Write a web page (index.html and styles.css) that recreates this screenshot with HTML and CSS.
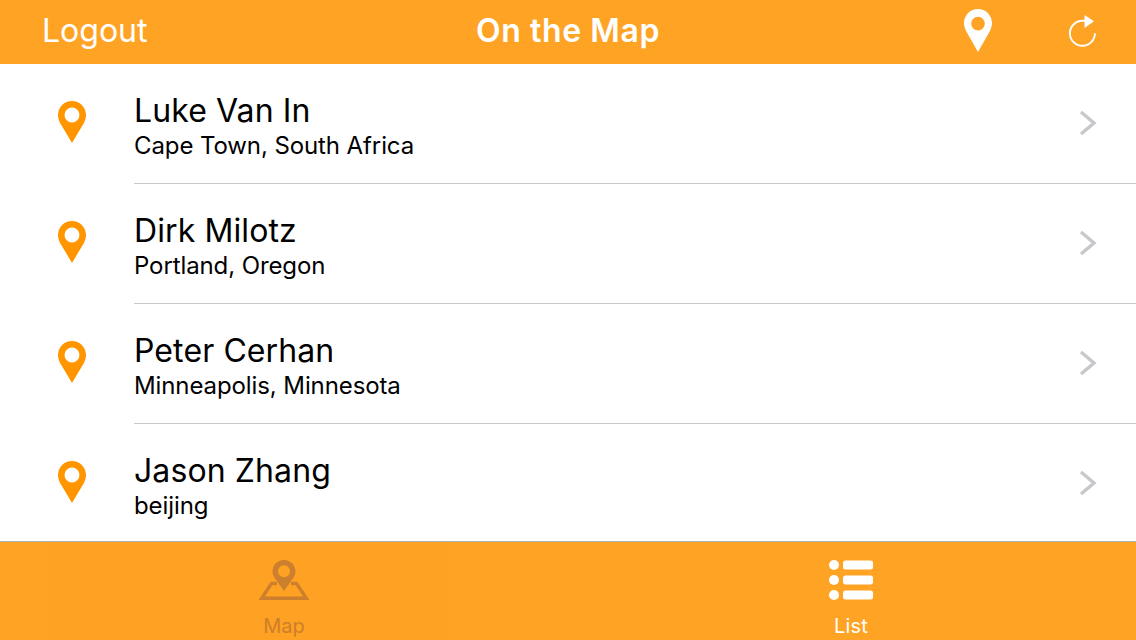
FILE: index.html
```html
<!DOCTYPE html>
<html lang="en">
<head>
<meta charset="utf-8">
<title>On the Map</title>
<link rel="stylesheet" href="styles.css">
</head>
<body>
<div class="app">
  <header class="navbar">
    <div class="nav-left"><span class="logout">Logout</span></div>
    <div class="nav-title">On the Map</div>
    <div class="nav-right">
      <svg class="nav-pin" viewBox="0 0 28 43"><path fill="#fff" fill-rule="evenodd" d="M14 0C6.3 0 0 6.2 0 14c0 3 1 5.800 2.200 8.200L14 43l11.800-20.800C27 19.800 28 17 28 14 28 6.200 21.700 0 14 0zm0 7.800a6.800 6.800 0 1 1 0 13.600 6.800 6.800 0 0 1 0-13.600z"/></svg>
      <svg class="nav-refresh" viewBox="0 0 30 32"><path fill="none" stroke="#fff" stroke-width="1.900" d="M26.900 18.300a12.500 12.500 0 1 1-12.500-12.500h3"/><path fill="#fff" d="M16.500 0 26 6.300 16.500 13z"/></svg>
    </div>
  </header>

  <main class="list">
    <div class="row">
      <div class="row-icon"><svg class="pin" viewBox="0 0 28 42"><path fill="#ff9500" fill-rule="evenodd" d="M14 0C6.300 0 0 6.200 0 14c0 3 1 5.800 2.200 8.200L14 42l11.800-19.800C27 19.800 28 17 28 14 28 6.200 21.700 0 14 0zm0 6.500a7.500 7.500 0 1 1 0 15 7.500 7.500 0 0 1 0-15z"/></svg></div>
      <div class="row-body">
        <div class="row-text"><div class="name">Luke Van In</div><div class="place">Cape Town, South Africa</div></div>
        <svg class="chevron" viewBox="0 0 18 26"><path fill="none" stroke="#c7c7cc" stroke-width="3.400" d="M2 2l13 11L2 24"/></svg>
      </div>
    </div>
    <div class="row">
      <div class="row-icon"><svg class="pin" viewBox="0 0 28 42"><path fill="#ff9500" fill-rule="evenodd" d="M14 0C6.300 0 0 6.200 0 14c0 3 1 5.800 2.200 8.200L14 42l11.800-19.800C27 19.800 28 17 28 14 28 6.200 21.700 0 14 0zm0 6.500a7.500 7.500 0 1 1 0 15 7.500 7.500 0 0 1 0-15z"/></svg></div>
      <div class="row-body">
        <div class="row-text"><div class="name">Dirk Milotz</div><div class="place">Portland, Oregon</div></div>
        <svg class="chevron" viewBox="0 0 18 26"><path fill="none" stroke="#c7c7cc" stroke-width="3.400" d="M2 2l13 11L2 24"/></svg>
      </div>
    </div>
    <div class="row">
      <div class="row-icon"><svg class="pin" viewBox="0 0 28 42"><path fill="#ff9500" fill-rule="evenodd" d="M14 0C6.300 0 0 6.200 0 14c0 3 1 5.800 2.200 8.200L14 42l11.800-19.800C27 19.800 28 17 28 14 28 6.200 21.700 0 14 0zm0 6.500a7.500 7.500 0 1 1 0 15 7.500 7.500 0 0 1 0-15z"/></svg></div>
      <div class="row-body">
        <div class="row-text"><div class="name">Peter Cerhan</div><div class="place">Minneapolis, Minnesota</div></div>
        <svg class="chevron" viewBox="0 0 18 26"><path fill="none" stroke="#c7c7cc" stroke-width="3.400" d="M2 2l13 11L2 24"/></svg>
      </div>
    </div>
    <div class="row">
      <div class="row-icon"><svg class="pin" viewBox="0 0 28 42"><path fill="#ff9500" fill-rule="evenodd" d="M14 0C6.300 0 0 6.200 0 14c0 3 1 5.800 2.200 8.200L14 42l11.800-19.800C27 19.800 28 17 28 14 28 6.200 21.700 0 14 0zm0 6.500a7.500 7.500 0 1 1 0 15 7.500 7.500 0 0 1 0-15z"/></svg></div>
      <div class="row-body">
        <div class="row-text"><div class="name">Jason Zhang</div><div class="place">beijing</div></div>
        <svg class="chevron" viewBox="0 0 18 26"><path fill="none" stroke="#c7c7cc" stroke-width="3.400" d="M2 2l13 11L2 24"/></svg>
      </div>
    </div>
  </main>

  <nav class="tabbar">
    <div class="tab tab-dim">
      <svg class="tab-icon" viewBox="0 0 50 40"><path fill="none" stroke="#cc7f2c" stroke-width="3.400" d="M18 23.500h-5.500L2.600 38.300h44.800L37.500 23.500H32"/><path fill="#cc7f2c" fill-rule="evenodd" d="M25 0c-6.300 0-11.500 5-11.500 11.300 0 2.400.8 4.500 1.900 6.300L25 31l9.600-13.400c1.100-1.800 1.900-3.900 1.900-6.300C36.500 5 31.300 0 25 0zm0 5.300a6 6 0 1 1 0 12 6 6 0 0 1 0-12z"/></svg>
      <span class="tab-label">Map</span>
    </div>
    <div class="tab">
      <svg class="tab-icon" viewBox="0 0 50 40"><g fill="#fff"><circle cx="7" cy="5" r="5"/><circle cx="7" cy="20" r="5"/><circle cx="7" cy="35" r="5"/><rect x="16" y=".5" width="30" height="9" rx="2.500"/><rect x="16" y="15.500" width="30" height="9" rx="2.500"/><rect x="16" y="30.500" width="30" height="9" rx="2.500"/></g></svg>
      <span class="tab-label tab-label-list">List</span>
    </div>
  </nav>
</div>
</body>
</html>
```
FILE: styles.css
```css
* { box-sizing: border-box; }
html, body { margin: 0; padding: 0; }
body {
  font-family: Inter, "Liberation Sans", sans-serif;
  background: #fff;
  color: #000;
}
.app {
  width: 1136px;
  height: 640px;
  display: flex;
  flex-direction: column;
  overflow: hidden;
}
.navbar {
  flex: 0 0 64px;
  background: #ffa324;
  color: #fff;
  display: grid;
  grid-template-columns: 1fr auto 1fr;
  align-items: center;
  padding-bottom: 4px;
}
.nav-left { padding-left: 42px; }
.logout { font-size: 32px; letter-spacing: 0; }
.nav-title { font-size: 32px; font-weight: 600; letter-spacing: 0.6px; }
.nav-right {
  display: flex;
  justify-content: flex-end;
  align-items: center;
  padding-right: 38px;
  gap: 76px;
}
.nav-pin { width: 28px; height: 43px; display: block; }
.nav-refresh { width: 30px; height: 32px; display: block; margin-top: 1px; }
.list { flex: 1 1 0; overflow: hidden; min-height: 0; }
.row { height: 120px; display: flex; }
.row-icon {
  flex: 0 0 134px;
  padding: 37px 0 0 58px;
}
.pin { width: 28px; height: 42px; display: block; }
.row-body {
  flex: 1;
  display: flex;
  align-items: center;
  justify-content: space-between;
  border-bottom: 1px solid #c8c7cc;
  padding-right: 39px;
}
.row-text { padding-top: 6px; }
.name { font-size: 32px; line-height: 38px; letter-spacing: 0.1px; margin-bottom: 1px; }
.place { font-size: 24px; line-height: 30px; letter-spacing: -0.1px; }
.chevron { width: 18px; height: 26px; display: block; margin-bottom: 2px; }
.tabbar {
  flex: 0 0 99px;
  background: #ffa324 linear-gradient(90deg, rgba(255,160,34,0) 3%, #ffa122 14%, #ffa122 30%, rgba(255,160,34,0) 40%);
  border-top: 1px solid #b2b2b2;
  display: grid;
  grid-template-columns: 1fr 1fr;
}
.tab {
  display: flex;
  flex-direction: column;
  align-items: center;
  padding-top: 18px;
  color: #fff;
}
.tab-dim { color: #cc7f2c; }
.tab-icon { width: 50px; height: 40px; display: block; }
.tab-label { font-size: 20px; line-height: 24px; margin-top: 14px; }
.tab-label-list { letter-spacing: 0.2px; margin-right: 2px; }
```
